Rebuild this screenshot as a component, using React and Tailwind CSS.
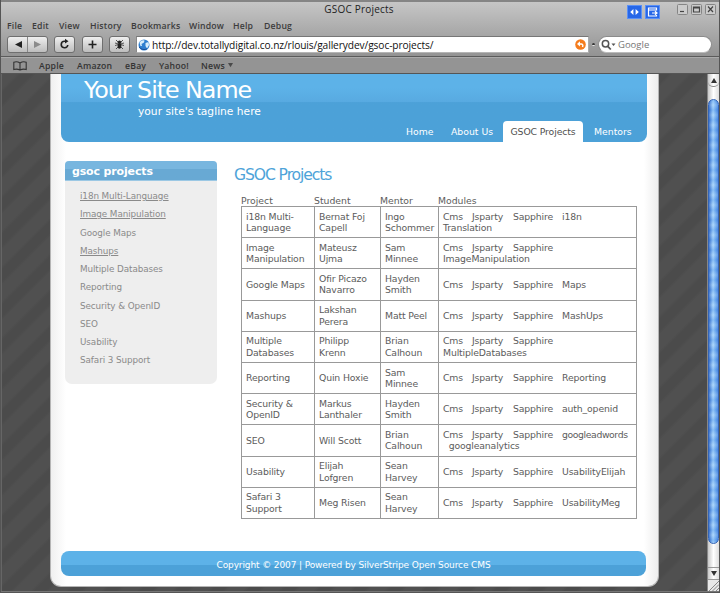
import React from 'react';

const rows = [
  ['i18n Multi-\nLanguage', 'Bernat Foj\nCapell', 'Ingo\nSchommer', 'i18n', 'Translation'],
  ['Image\nManipulation', 'Mateusz\nUjma', 'Sam\nMinnee', '', 'ImageManipulation'],
  ['Google Maps', 'Ofir Picazo\nNavarro', 'Hayden\nSmith', 'Maps', ''],
  ['Mashups', 'Lakshan\nPerera', 'Matt Peel', 'MashUps', ''],
  ['Multiple\nDatabases', 'Philipp\nKrenn', 'Brian\nCalhoun', '', 'MultipleDatabases'],
  ['Reporting', 'Quin Hoxie', 'Sam\nMinnee', 'Reporting', ''],
  ['Security &\nOpenID', 'Markus\nLanthaler', 'Hayden\nSmith', 'auth_openid', ''],
  ['SEO', 'Will Scott', 'Brian\nCalhoun', 'googleadwords', '\u00a0 googleanalytics'],
  ['Usability', 'Elijah\nLofgren', 'Sean\nHarvey', 'UsabilityElijah', ''],
  ['Safari 3\nSupport', 'Meg Risen', 'Sean\nHarvey', 'UsabilityMeg', ''],
];

const sideLinks = [
  ['i18n Multi-Language', true],
  ['Image Manipulation', true],
  ['Google Maps', false],
  ['Mashups', true],
  ['Multiple Databases', false],
  ['Reporting', false],
  ['Security & OpenID', false],
  ['SEO', false],
  ['Usability', false],
  ['Safari 3 Support', false],
];

const button =
  'flex h-[17px] items-center justify-center rounded-[3px] border border-[#6f6f6f] bg-linear-to-b from-[#efefef] to-[#bdbdbd]';

function Chrome() {
  return (
    <header className="flex h-[74px] flex-col border-b border-[#555] bg-linear-to-b from-[#c8c8c8] to-[#929292] to-[57px] font-['Open_Sans',sans-serif] text-[#333]">
      <div className="flex h-[19px] border-t-2 border-[#858585]">
        <div className="w-[230px]" />
        <h1 className="flex-1 whitespace-pre pt-[1px] text-center text-[10px] leading-[13px] tracking-[0.2px] text-[#222]">
          GSOC Projects
        </h1>
        <div className="flex w-[232px] gap-[2px] pl-[140px]">
          <svg className="mt-[3px]" width="15" height="14" viewBox="0 0 15 14">
            <rect width="15" height="14" rx="1" fill="#2767e8" />
            <rect x=".5" y=".5" width="14" height="13" fill="none" stroke="#5b90f5" />
            <path d="M6.400 4v6L3.200 7zM8.600 4v6l3.200-3z" fill="#fff" />
          </svg>
          <svg className="ml-[1px] mt-[3px]" width="15" height="14" viewBox="0 0 15 14">
            <rect width="15" height="14" rx="1" fill="#2767e8" />
            <rect x=".5" y=".5" width="14" height="13" fill="none" stroke="#5b90f5" />
            <path d="M11.500 5.500V3h-8v8h8V10M3 5h9M7 8h5M10 6.300 12 8l-2 1.700" fill="none" stroke="#fff" strokeWidth="1.200" />
          </svg>
          <div className="ml-[15px] mt-[2px] flex gap-[3px]">
            {[
              'M3 7.500h4',
              'M2.500 3h6v5h-6zM2.500 4h6',
              'M3 2.500l5 5.500M8 2.500 3 8',
            ].map((d) => (
              <svg key={d} width="11" height="11" viewBox="0 0 11 11">
                <rect x=".5" y=".5" width="10" height="10" rx="1" fill="#cbcbcb" stroke="#858585" />
                <path d={d} fill="none" stroke="#444" strokeWidth="1.200" />
              </svg>
            ))}
          </div>
        </div>
      </div>
      <nav className="flex h-[17px] pl-[6px] pt-[0.500px] text-[8.700px] font-semibold leading-[12px] tracking-[0.2px] text-[#3c3c3c]">
        <span className="w-[25px]">File</span>
        <span className="w-[27px]">Edit</span>
        <span className="w-[31px]">View</span>
        <span className="w-[41px]">History</span>
        <span className="w-[58px]">Bookmarks</span>
        <span className="w-[44px]">Window</span>
        <span className="w-[31px]">Help</span>
        <span>Debug</span>
      </nav>
      <div className="flex h-[21px] border-b border-[#5b5b5b] pl-[6px]">
        <div className={`${button} w-[41px]`}>
          <svg width="39" height="15" viewBox="0 0 39 15">
            <path d="M14 4v7L7 7.500z" fill="#222" />
            <path d="M19.500 0v15" stroke="#888" />
            <path d="M26 4v7l7-3.500z" fill="#8b8b8b" />
          </svg>
        </div>
        <div className={`${button} ml-[6px] w-[21px]`}>
          <svg width="13" height="13" viewBox="0 0 13 13">
            <path d="M8 3.200H6.500a3.300 3.300 0 1 0 3.300 3.800" fill="none" stroke="#222" strokeWidth="1.600" />
            <path d="M7 .8 10.500 3.200 7 5.600z" fill="#222" />
          </svg>
        </div>
        <div className={`${button} ml-[7px] w-[21px]`}>
          <svg width="9" height="9" viewBox="0 0 9 9">
            <path d="M4.500.5v8M.5 4.500h8" stroke="#222" strokeWidth="1.600" />
          </svg>
        </div>
        <div className={`${button} ml-[6px] w-[21px]`}>
          <svg width="11" height="11" viewBox="0 0 11 11">
            <path d="M2 1l3 3M9 1 6 4M1 4l9 2.500M10 4 1 6.500M2 10l3-3M9 10 6 7" stroke="#333" strokeWidth=".8" />
            <ellipse cx="5.500" cy="7" rx="1.900" ry="2.800" fill="#222" />
            <circle cx="5.500" cy="3.200" r="1.700" fill="#222" />
          </svg>
        </div>
        <div className="ml-[6px] flex h-[17px] w-[453px] items-center border border-b-[#b5b5b5] border-l-[#888] border-r-[#aaa] border-t-[#777] bg-white pl-[1px] pr-[2px]">
          <svg width="12" height="12" viewBox="0 0 12 12">
            <circle cx="6" cy="6" r="5.500" fill="#2f7fd0" />
            <path d="M1.500 3.500Q3.500.6 6.500 1.500L6 3.500 3.500 5 4 7 2.500 7zM7.500 4l3-1 .6 3L9 9.500 7.500 7z" fill="#d7ecfa" />
            <path d="M1 8q4 4 8 1.800" stroke="#1a4e99" fill="none" />
          </svg>
          <span className="ml-[2px] flex-1 whitespace-nowrap text-[10.200px] leading-[14px] tracking-[-0.1px] text-[#111]">
            http://dev.totallydigital.co.nz/rlouis/gallerydev/gsoc-projects/
          </span>
          <svg width="11" height="11" viewBox="0 0 11 11">
            <circle cx="5.500" cy="5.500" r="5.300" fill="#f57c1d" />
            <path d="M3 5h3.500q2 .3 1 3" fill="none" stroke="#fff" strokeWidth="1.400" />
            <path d="M5 2.200V7.500L2 5z" fill="#fff" />
          </svg>
        </div>
        <span className="ml-[3px] mt-[7px] h-[3px] w-[3px] rounded-full border-b border-[#eee] bg-[#333]" />
        <div className="ml-[3px] flex h-[17px] w-[114px] items-center rounded-full border border-[#8b8b8b] border-b-[#bbb] bg-white pl-[2px]">
          <svg width="15" height="12" viewBox="0 0 15 12">
            <circle cx="4.500" cy="4.700" r="3.200" fill="none" stroke="#555" strokeWidth="1.500" />
            <path d="M6.800 7.300 9.800 10.500" stroke="#555" strokeWidth="1.800" />
            <path d="M10.500 4.500h4l-2 2.500z" fill="#555" />
          </svg>
          <span className="ml-[2px] text-[9.500px] leading-[14px] text-[#777]">Google</span>
        </div>
      </div>
      <div className="flex h-[16px] items-center border-t border-[#aaa] bg-[#949494] pl-[12px] text-[8.700px] font-semibold leading-[12px] tracking-[0.2px]">
        <svg className="mr-[12px]" width="14" height="10" viewBox="0 0 14 10">
          <path d="M7 2Q4 0 .8 1.200V8.500Q4 7.500 7 9q3-1.500 6.200-.5V1.200Q10 0 7 2zV9" fill="none" stroke="#333" strokeWidth="1.100" />
        </svg>
        <span className="w-[38px]">Apple</span>
        <span className="w-[48px]">Amazon</span>
        <span className="w-[34px]">eBay</span>
        <span className="w-[42px]">Yahoo!</span>
        <span>News</span>
        <svg className="ml-[3px]" width="5" height="5" viewBox="0 0 6 6">
          <path d="M0 0h6L3 5z" fill="#4a4a4a" />
        </svg>
      </div>
    </header>
  );
}

function Sidebar() {
  return (
    <aside className="ml-[4px] mt-[19px] h-[223px] w-[152px] overflow-hidden rounded-t-[4px] rounded-b-[7px] bg-[#eee]">
      <h2 className="h-[20px] border-b border-[#9cc8e4] bg-linear-to-b from-[#78b6df] from-[42%] to-[#68a9d4] to-[42%] pl-[7px] text-[11px] font-bold leading-[21px] tracking-[-0.15px] text-white">
        gsoc projects
      </h2>
      <ul className="pl-[15px] pt-[6px] text-[8.800px] tracking-[-0.08px] text-[#8a8a8a]">
        {sideLinks.map(([label, underlined]) => (
          <li key={label} className="h-[18.270px] leading-[19px]">
            <a className={underlined ? 'underline decoration-1 underline-offset-1' : ''}>{label}</a>
          </li>
        ))}
      </ul>
    </aside>
  );
}

function ProjectTable() {
  return (
    <section className="ml-[17px] mt-[23px]">
      <h2 className="h-[32px] whitespace-nowrap text-[15.600px] leading-[20px] tracking-[-1.100px] text-[#4ea3d9]">GSOC Projects</h2>
      <div className="ml-[7px] w-[396px] text-[9.300px] leading-[11.500px] tracking-[-0.14px] text-[#5c5c5c]">
        <div className="grid h-[9px] grid-cols-[73px_66px_58px_199px] tracking-normal">
          {['Project', 'Student', 'Mentor', 'Modules'].map((h) => (
            <span key={h} className="-mt-[2px]">{h}</span>
          ))}
        </div>
        <div className="border-b border-r border-[#999]">
          {rows.map(([project, student, mentor, mod, second]) => (
            <div key={project} className="grid h-[31.200px] grid-cols-[73px_66px_58px_198px] whitespace-pre">
              {[project, student, mentor].map((cell, i) => (
                <div key={i} className="flex items-center border-l border-t border-[#999] pl-[4px]">{cell}</div>
              ))}
              <div className="flex flex-col justify-center border-l border-t border-[#999] pl-[4px]">
                <div className="grid grid-cols-[29px_41px_49px_70px]">
                  <span>Cms</span>
                  <span>Jsparty</span>
                  <span>Sapphire</span>
                  <span className={mod === 'googleadwords' ? 'tracking-[-0.400px]' : ''}>{mod}</span>
                </div>
                {second && <div>{second}</div>}
              </div>
            </div>
          ))}
        </div>
      </div>
    </section>
  );
}

function ScrollBar() {
  return (
    <div className="flex w-[12px] flex-col border-l border-[#888] bg-linear-to-r from-[#c8c8c8] via-white to-[#ddd]">
      <div className="flex h-[13px] items-center justify-center rounded-b-[5px] border-b border-[#888]">
        <svg width="6" height="5" viewBox="0 0 6 5"><path d="M0 5h6L3 0z" fill="#333" /></svg>
      </div>
      <div className="mt-[12px] h-[445px] rounded-full border border-[#3465b7] bg-linear-to-r from-[#386fcb] via-[#a6d5fc] via-45% to-[#4a8be2]">
        <div className="h-full w-full rounded-full bg-[repeating-linear-gradient(180deg,#1f6be030_0px,#ffffff20_5px,#1f6be030_10px)]" />
      </div>
      <div className="mt-auto flex h-[13px] items-center justify-center border-y border-[#999]">
        <svg width="6" height="5" viewBox="0 0 6 5"><path d="M0 0h6L3 5z" fill="#333" /></svg>
      </div>
      <svg width="11" height="11" viewBox="0 0 11 11">
        <rect width="11" height="11" fill="#e8e8e8" />
        <path d="M1 11 11 1M4.500 11 11 4.500M8 11l3-3" stroke="#888" />
      </svg>
    </div>
  );
}

export default function App() {
  return (
    <div className="flex h-[593px] w-[720px] flex-col overflow-hidden border-l border-r border-[#555] bg-[#555] font-['DejaVu_Sans',sans-serif]">
      <Chrome />
      <div className="flex h-[518px] border-b border-[#777] bg-[repeating-linear-gradient(135deg,#505050_0px,#505050_11px,#4b4b4b_14px,#4b4b4b_22px,#505050_25px)]">
        <div className="w-[49px] shrink-0 border-l border-[#666]" />
        <main className="flex h-[513px] w-[609px] flex-col rounded-b-[11px] border-x border-b border-[#b5b5b5] bg-[linear-gradient(90deg,#f0f0f0_0px,#fff_15px,#fff_593px,#ededed_607px)] px-[10px]">
          <div className="flex h-[68px] w-[586px] flex-col rounded-b-[8px] bg-linear-to-b from-[#5db2e8] from-[20%] via-[#58aae1] via-[41%] to-[#4ca1d8] to-[42%] text-white">
            <h1 className="h-[30px] whitespace-nowrap pl-[23px] text-[23.800px] leading-[33px] tracking-[-1.050px]">Your Site Name</h1>
            <p className="h-[17px] whitespace-nowrap pl-[77px] text-[10.700px] leading-[15px]">your site's tagline here</p>
            <nav className="flex h-[21px] text-[9.300px] leading-[21px]">
              <span className="ml-[345px] w-[45px]">Home</span>
              <span className="w-[52px] whitespace-nowrap">About Us</span>
              <span className="w-[80px] whitespace-nowrap rounded-t-[4px] bg-white text-center tracking-[-0.120px] text-[#505050]">GSOC Projects</span>
              <span className="ml-[11px]">Mentors</span>
            </nav>
          </div>
          <div className="flex h-[409px]">
            <Sidebar />
            <ProjectTable />
          </div>
          <footer className="h-[25px] w-[585px] shrink-0 whitespace-nowrap rounded-[8px] bg-linear-to-b from-[#5db2e8] from-[55%] to-[#4ca1d8] to-[55%] text-center text-[9px] leading-[29px] tracking-[-0.115px] text-white">
            Copyright © 2007 | Powered by SilverStripe Open Source CMS
          </footer>
        </main>
        <div className="flex-1" />
        <ScrollBar />
      </div>
    </div>
  );
}
